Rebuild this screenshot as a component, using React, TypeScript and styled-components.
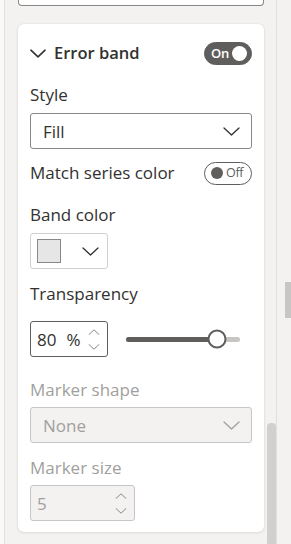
import * as React from "react";
import styled, { createGlobalStyle } from "styled-components";

const GlobalStyle = createGlobalStyle`
  html, body {
    margin: 0;
    padding: 0;
  }

  body {
    font-family: "Open Sans", "Noto Sans", sans-serif;
    background: #f3f2f1;
    color: #323130;
  }
`;

const Frame = styled.div`
  display: flex;
  height: 544px;
  overflow: hidden;
`;

const LeftEdge = styled.div`
  width: 4px;
  background: #faf9f8;
  border-right: 1px solid #e1dfdd;
`;

const Pane = styled.div`
  position: relative;
  width: 272px;
  box-sizing: border-box;
  padding-left: 13px;
  background: #f3f2f1;
  border-right: 1px solid #e1dfdd;
`;

const PaneScrollThumb = styled.div`
  position: absolute;
  right: 0;
  top: 423px;
  bottom: 0;
  width: 9px;
  border-radius: 4px 4px 0 0;
  background: #d2d0ce;
`;

const RightRail = styled.div`
  flex: 1;
  display: flex;
  justify-content: flex-end;
  align-items: flex-start;
  padding-top: 282px;
  background: #f3f2f1;
`;

const RailThumb = styled.div`
  width: 6px;
  height: 36px;
  background: #c8c6c4;
`;

const PrevBox = styled.div`
  width: 246px;
  height: 6px;
  box-sizing: border-box;
  background: #ffffff;
  border: 1px solid #8a8886;
  border-top: none;
  border-radius: 0 0 4px 4px;
`;

const Card = styled.section`
  width: 246px;
  box-sizing: border-box;
  margin-top: 18px;
  padding: 18px 12px 11px 12px;
  background: #ffffff;
  border-radius: 6px;
  box-shadow: 0 0 2px rgba(0, 0, 0, 0.1), 0 1px 3px rgba(0, 0, 0, 0.08);
`;

const Row = styled.div<{ $gap?: number }>`
  display: flex;
  align-items: center;
  justify-content: space-between;
  height: 22px;
  margin-top: ${(p) => p.$gap ?? 0}px;
`;

const Title = styled.div`
  display: flex;
  align-items: center;
  gap: 8px;
  font-size: 16.5px;
  font-weight: 600;
  line-height: 22px;
  color: #323130;
`;

const Label = styled.div<{ $gap: number; $disabled?: boolean }>`
  margin-top: ${(p) => p.$gap}px;
  font-size: 17px;
  line-height: 22px;
  color: ${(p) => (p.$disabled ? "#a19f9d" : "#323130")};
`;

const RowText = styled.span`
  font-size: 17px;
  line-height: 22px;
  color: #323130;
`;

const Toggle = styled.div<{ $on: boolean }>`
  display: flex;
  align-items: center;
  justify-content: ${(p) => (p.$on ? "space-between" : "flex-start")};
  gap: 3px;
  width: 48px;
  height: 23px;
  box-sizing: border-box;
  padding: ${(p) => (p.$on ? "0 4px 0 6px" : "0 6px")};
  border-radius: 12px;
  border: 1px solid #605e5c;
  background: ${(p) => (p.$on ? "#605e5c" : "#ffffff")};
  color: ${(p) => (p.$on ? "#ffffff" : "#605e5c")};
  font-size: ${(p) => (p.$on ? 13 : 12.5)}px;
  font-weight: ${(p) => (p.$on ? 600 : 400)};
  letter-spacing: -0.3px;
  line-height: 1;
`;

const Knob = styled.span<{ $on: boolean }>`
  width: ${(p) => (p.$on ? 15 : 12)}px;
  height: ${(p) => (p.$on ? 15 : 12)}px;
  border-radius: 50%;
  flex-shrink: 0;
  background: ${(p) => (p.$on ? "#ffffff" : "#605e5c")};
`;

const Dropdown = styled.div<{ $gap: number; $disabled?: boolean }>`
  display: flex;
  align-items: center;
  justify-content: space-between;
  margin-top: ${(p) => p.$gap}px;
  height: 36px;
  box-sizing: border-box;
  padding: 0 11px 0 12px;
  border: 1px solid ${(p) => (p.$disabled ? "#c8c6c4" : "#8a8886")};
  border-radius: 3px;
  background: ${(p) => (p.$disabled ? "#f3f2f1" : "#ffffff")};
  color: ${(p) => (p.$disabled ? "#a19f9d" : "#323130")};
  font-size: 17px;
`;

const ColorPicker = styled.div`
  display: flex;
  align-items: center;
  justify-content: space-between;
  margin-top: 7px;
  width: 78px;
  height: 36px;
  box-sizing: border-box;
  padding: 0 8px 0 6px;
  border: 1px solid #d2d0ce;
  border-radius: 3px;
`;

const Swatch = styled.span<{ $color: string }>`
  width: 24px;
  height: 24px;
  box-sizing: border-box;
  border: 1px solid #8a8886;
  background: ${(p) => p.$color};
`;

const SliderRow = styled.div`
  display: flex;
  align-items: center;
  gap: 18px;
  margin-top: 16px;
`;

const NumberBox = styled.div<{ $gap?: number; $width: number; $disabled?: boolean }>`
  display: flex;
  align-items: center;
  margin-top: ${(p) => p.$gap ?? 0}px;
  width: ${(p) => p.$width}px;
  height: 36px;
  box-sizing: border-box;
  padding: 0 7px 0 6px;
  border: 1px solid ${(p) => (p.$disabled ? "#c8c6c4" : "#605e5c")};
  border-radius: 3px;
  background: ${(p) => (p.$disabled ? "#f3f2f1" : "#ffffff")};
  color: ${(p) => (p.$disabled ? "#a19f9d" : "#323130")};
  font-size: 17px;
`;

const Unit = styled.span`
  margin-left: 10px;
`;

const Spinner = styled.div`
  display: flex;
  flex-direction: column;
  gap: 9px;
  margin-left: auto;
`;

const Track = styled.div`
  position: relative;
  width: 114px;
  height: 5px;
  border-radius: 3px;
  background: #c8c6c4;
`;

const TrackFill = styled.div`
  height: 100%;
  border-radius: 3px;
  background: #605e5c;
`;

const Thumb = styled.div`
  position: absolute;
  top: 50%;
  width: 19px;
  height: 19px;
  box-sizing: border-box;
  border: 2px solid #605e5c;
  border-radius: 50%;
  background: #ffffff;
  transform: translate(-50%, -50%);
`;

const Chevron = ({ color = "#323130", width = 17, height = 9, stroke = 1.3 }) => (
  <svg width={width} height={height} viewBox="0 0 17 9" fill="none">
    <polyline
      points="1,1 8.5,8 16,1"
      stroke={color}
      strokeWidth={stroke}
      strokeLinecap="round"
      strokeLinejoin="round"
    />
  </svg>
);

const Caret = ({ up, color }: { up?: boolean; color: string }) => (
  <svg width="12" height="6" viewBox="0 0 12 6" fill="none">
    <polyline
      points={up ? "1,5.5 6,0.8 11,5.5" : "1,0.5 6,5.2 11,0.5"}
      stroke={color}
      strokeWidth={1}
      strokeLinecap="round"
    />
  </svg>
);

const Spin = ({ color }: { color: string }) => (
  <Spinner>
    <Caret up color={color} />
    <Caret color={color} />
  </Spinner>
);

const Slider = ({ value }: { value: number }) => (
  <Track>
    <TrackFill style={{ width: `${value}%` }} />
    <Thumb style={{ left: `${value}%` }} />
  </Track>
);

export default function App() {
  const transparency = 80;

  return (
    <>
      <GlobalStyle />
      <Frame>
        <LeftEdge />
        <Pane>
          <PrevBox />
          <Card>
            <Row>
              <Title>
                <Chevron width={16} height={9} stroke={1.7} />
                Error band
              </Title>
              <Toggle $on>
                On
                <Knob $on />
              </Toggle>
            </Row>

            <Label $gap={20}>Style</Label>
            <Dropdown $gap={7}>
              Fill
              <Chevron />
            </Dropdown>

            <Row $gap={13}>
              <RowText>Match series color</RowText>
              <Toggle $on={false}>
                <Knob $on={false} />
                Off
              </Toggle>
            </Row>

            <Label $gap={20}>Band color</Label>
            <ColorPicker>
              <Swatch $color="#e6e6e6" />
              <Chevron />
            </ColorPicker>

            <Label $gap={14}>Transparency</Label>
            <SliderRow>
              <NumberBox $width={78}>
                {transparency}
                <Unit>%</Unit>
                <Spin color="#8a8886" />
              </NumberBox>
              <Slider value={transparency} />
            </SliderRow>

            <Label $gap={22} $disabled>
              Marker shape
            </Label>
            <Dropdown $gap={6} $disabled>
              None
              <Chevron color="#a19f9d" />
            </Dropdown>

            <Label $gap={14} $disabled>
              Marker size
            </Label>
            <NumberBox $gap={6} $width={105} $disabled>
              5
              <Spin color="#8a8886" />
            </NumberBox>
          </Card>
          <PaneScrollThumb />
        </Pane>
        <RightRail>
          <RailThumb />
        </RightRail>
      </Frame>
    </>
  );
}
